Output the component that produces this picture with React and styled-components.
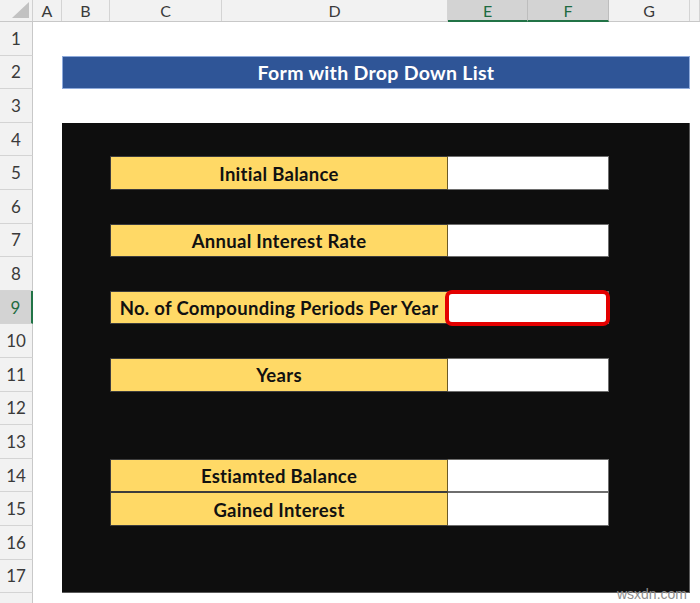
import React from "react";
import styled, { createGlobalStyle, css } from "styled-components";

const Global = createGlobalStyle`
  html, body { margin: 0; padding: 0; background: #ffffff; overflow: hidden; }
  #root { width: 700px; height: 603px; }
`;

const ROW_H = 33.6;
const cellFont = `"Lato", "Open Sans", "Liberation Sans", sans-serif`;

const Sheet = styled.div`
  position: relative;
  width: 700px;
  height: 603px;
  overflow: hidden;
  background: #ffffff;
  font-family: ${cellFont};
`;

const ColHeaderRow = styled.div`
  display: grid;
  grid-template-columns: 33px 29px 48px 112px 226px 80px 81px 81px 1fr;
  height: 22px;
  background: #f2f2f2;
  border-bottom: 1px solid #c8c8c8;
  box-sizing: border-box;
`;

const Corner = styled.div`
  border-right: 1px solid #d0d0d0;
  display: flex;
  align-items: flex-end;
  justify-content: flex-end;
  padding: 0 3px 3px 0;
`;

const ColHeader = styled.div`
  display: flex;
  align-items: center;
  justify-content: center;
  font-size: 16px;
  color: #3a3a3a;
  border-right: 1px solid #d4d4d4;
  box-sizing: border-box;
  ${(p) =>
    p.$active &&
    css`
      background: #d3d3d3;
      color: #1e6b41;
      border-bottom: 2px solid #217346;
      margin-bottom: -1px;
      border-right-color: #bdbdbd;
    `}
`;

const Body = styled.div`
  display: grid;
  grid-template-columns: 33px 29px 628px 1fr;
  grid-template-rows: repeat(18, ${ROW_H}px);
`;

const RowHeader = styled.div`
  grid-column: 1;
  grid-row: ${(p) => p.$row};
  display: flex;
  align-items: center;
  justify-content: center;
  font-size: 17px;
  color: #3a3a3a;
  background: #f2f2f2;
  border-right: 1px solid #c8c8c8;
  border-bottom: 1px solid #d4d4d4;
  box-sizing: border-box;
  ${(p) =>
    p.$active &&
    css`
      background: #d3d3d3;
      color: #1e6b41;
      border-right: 2px solid #217346;
    `}
`;

const Title = styled.div`
  grid-column: 3;
  grid-row: 2;
  display: flex;
  align-items: center;
  justify-content: center;
  background: #2f5597;
  border: 1px solid #8eaadb;
  box-sizing: border-box;
  color: #ffffff;
  font-weight: 700;
  font-size: 19.5px;
  letter-spacing: 0.3px;
`;

const Panel = styled.div`
  grid-column: 3;
  grid-row: 4 / span 14;
  background: #0e0e0e;
  border-right: 1px solid #5a5a5a;
  border-bottom: 1px solid #5a5a5a;
  box-sizing: border-box;
  display: grid;
  grid-template-columns: 48px 338px 161px;
  grid-template-rows: repeat(14, ${ROW_H}px);
`;

const Label = styled.div`
  grid-column: 2;
  grid-row: ${(p) => p.$row};
  display: flex;
  align-items: center;
  justify-content: center;
  padding-top: 1px;
  background: #ffd966;
  border: 1px solid #3c3c3c;
  border-right-color: #6b5a28;
  box-sizing: border-box;
  color: #111111;
  font-weight: 700;
  font-size: 18.5px;
  letter-spacing: 0.3px;
  white-space: nowrap;
`;

const Input = styled.div`
  grid-column: 3;
  grid-row: ${(p) => p.$row};
  position: relative;
  background: #ffffff;
  border: 1px solid #6e6e6e;
  border-left: none;
  box-sizing: border-box;
  ${(p) =>
    p.$selected &&
    css`
      &::after {
        content: "";
        position: absolute;
        top: -1.5px;
        left: -3px;
        right: -2px;
        bottom: -3px;
        border: 4px solid #e30000;
        border-radius: 7px;
        background: #ffffff;
      }
    `}
`;

const Watermark = styled.div`
  position: absolute;
  right: 13px;
  bottom: 1px;
  font-family: "Liberation Sans", sans-serif;
  font-size: 14px;
  color: #8f8f8f;
`;

const columns = ["A", "B", "C", "D", "E", "F", "G"];

const fields = [
  { row: 2, label: "Initial Balance" },
  { row: 4, label: "Annual Interest Rate" },
  { row: 6, label: "No. of Compounding Periods Per Year", selected: true },
  { row: 8, label: "Years" },
  { row: 11, label: "Estiamted Balance" },
  { row: 12, label: "Gained Interest" },
];

export default function App() {
  return (
    <>
      <Global />
      <Sheet>
        <ColHeaderRow>
          <Corner>
            <svg width="17" height="16" viewBox="0 0 17 16">
              <polygon points="17,0 17,16 0,16" fill="#c2c2c2" />
            </svg>
          </Corner>
          {columns.map((c) => (
            <ColHeader key={c} $active={c === "E" || c === "F"}>
              {c}
            </ColHeader>
          ))}
          <ColHeader />
        </ColHeaderRow>
        <Body>
          {Array.from({ length: 18 }, (_, i) => (
            <RowHeader key={i} $row={i + 1} $active={i + 1 === 9}>
              {i + 1 <= 17 ? i + 1 : ""}
            </RowHeader>
          ))}
          <Title>Form with Drop Down List</Title>
          <Panel>
            {fields.map((f) => (
              <React.Fragment key={f.row}>
                <Label $row={f.row}>{f.label}</Label>
                <Input $row={f.row} $selected={f.selected} />
              </React.Fragment>
            ))}
          </Panel>
        </Body>
        <Watermark>wsxdn.com</Watermark>
      </Sheet>
    </>
  );
}
